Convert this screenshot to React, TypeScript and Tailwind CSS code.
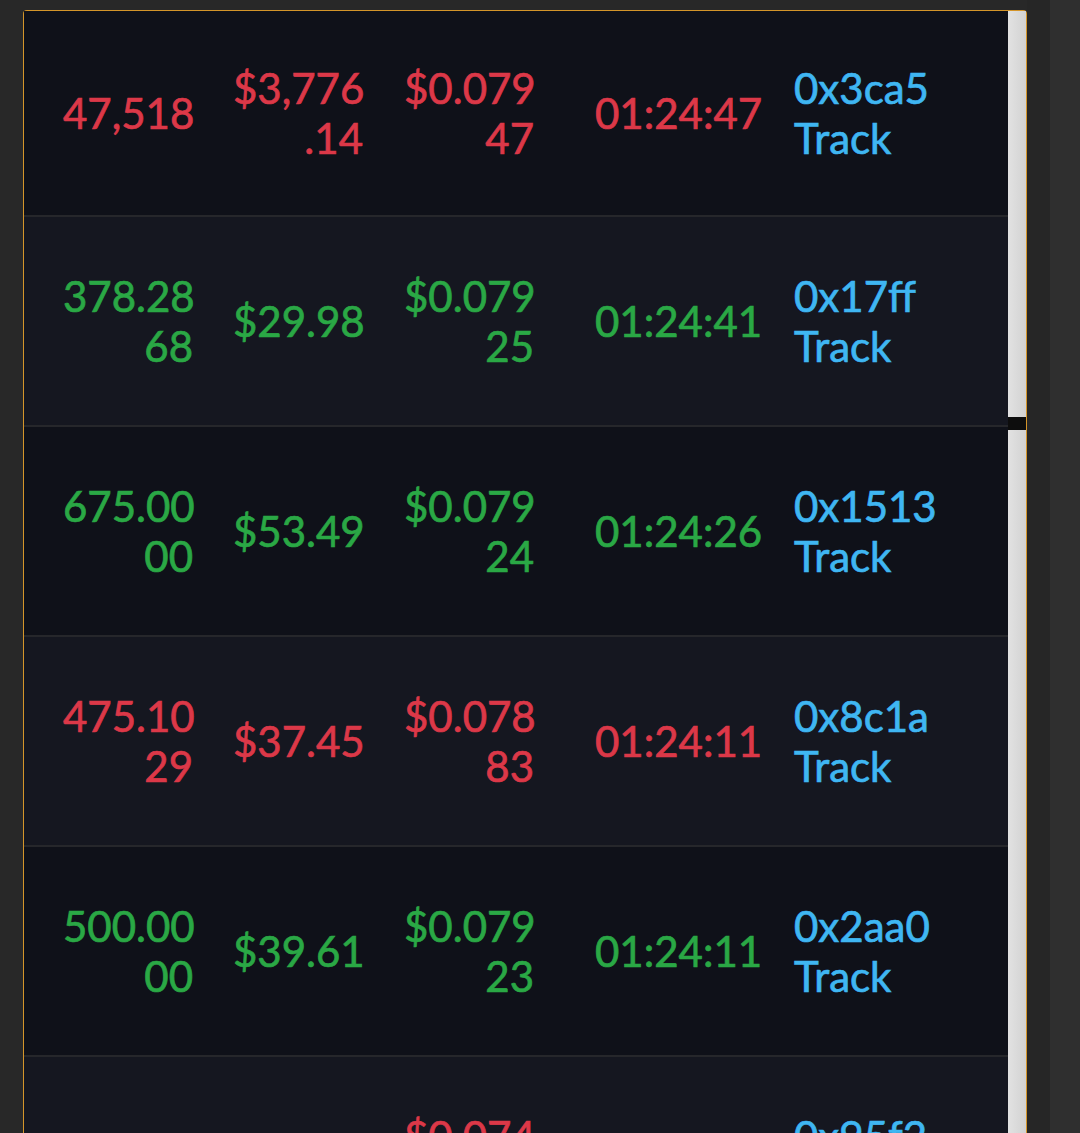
import React from "react";

type Row = {
  c: "r" | "g";
  amt: string[];
  usd: string[];
  price: string[];
  time: string;
  addr: string;
};

const rows: Row[] = [
  { c: "r", amt: ["47,518"], usd: ["$3,776", ".14"], price: ["$0.079", "47"], time: "01:24:47", addr: "0x3ca5" },
  { c: "g", amt: ["378.28", "68"], usd: ["$29.98"], price: ["$0.079", "25"], time: "01:24:41", addr: "0x17ff" },
  { c: "g", amt: ["675.00", "00"], usd: ["$53.49"], price: ["$0.079", "24"], time: "01:24:26", addr: "0x1513" },
  { c: "r", amt: ["475.10", "29"], usd: ["$37.45"], price: ["$0.078", "83"], time: "01:24:11", addr: "0x8c1a" },
  { c: "g", amt: ["500.00", "00"], usd: ["$39.61"], price: ["$0.079", "23"], time: "01:24:11", addr: "0x2aa0" },
  { c: "r", amt: ["1,250"], usd: ["$92.75"], price: ["$0.074", "20"], time: "01:23:58", addr: "0x95f2" },
];

function Lines({ lines }: { lines: string[] }) {
  return (
    <>
      {lines.map((l, i) => (
        <span key={i} className="block whitespace-nowrap">
          {l}
        </span>
      ))}
    </>
  );
}

export default function App() {
  return (
    <div
      className="flex h-[1133px] w-[1080px] overflow-hidden bg-[#282828]"
      style={{ fontFamily: "Lato, 'Open Sans', sans-serif" }}
    >
      <div className="w-[23px] shrink-0" />
      <div className="mt-[10px] flex w-[1004px] shrink-0 rounded-t-[4px] border border-b-0 border-[#d4952a]">
        <div className="flex min-w-0 flex-1 flex-col">
          {rows.map((r, i) => {
            const color = r.c === "r" ? "text-[#dc3848]" : "text-[#2aa845]";
            const bg = i % 2 === 0 ? "bg-[#0f1119]" : "bg-[#151720]";
            const h = i === 0 ? "h-[206px]" : "h-[210px]";
            return (
              <div
                key={i}
                className={`flex shrink-0 items-center border-b-2 border-[#26272b] text-[42px] font-normal leading-[50px] [-webkit-text-stroke:0.7px_currentColor] ${bg} ${h}`}
              >
                <div className={`ml-[39px] w-[130px] text-right ${color}`}>
                  <Lines lines={r.amt} />
                </div>
                <div className={`ml-[40px] w-[130px] text-right ${color}`}>
                  <Lines lines={r.usd} />
                </div>
                <div className={`ml-[41px] w-[130px] text-right ${color}`}>
                  <Lines lines={r.price} />
                </div>
                <div className={`ml-[61px] w-[168px] whitespace-nowrap ${color}`}>{r.time}</div>
                <div className="ml-[31px] text-[#3fb6f2]">
                  <span className="block">{r.addr}</span>
                  <span className="block">Track</span>
                </div>
              </div>
            );
          })}
        </div>
        <div className="flex w-[18px] shrink-0 flex-col bg-gradient-to-r from-[#e2e2e2] to-[#d2d2d2]">
          <div className="mt-[406px] h-[13px] bg-[#0d0d0d]" />
        </div>
      </div>
      <div className="w-[23px] shrink-0 bg-[#262626]" />
      <div className="flex-1 bg-[#2f2f2f]" />
    </div>
  );
}
